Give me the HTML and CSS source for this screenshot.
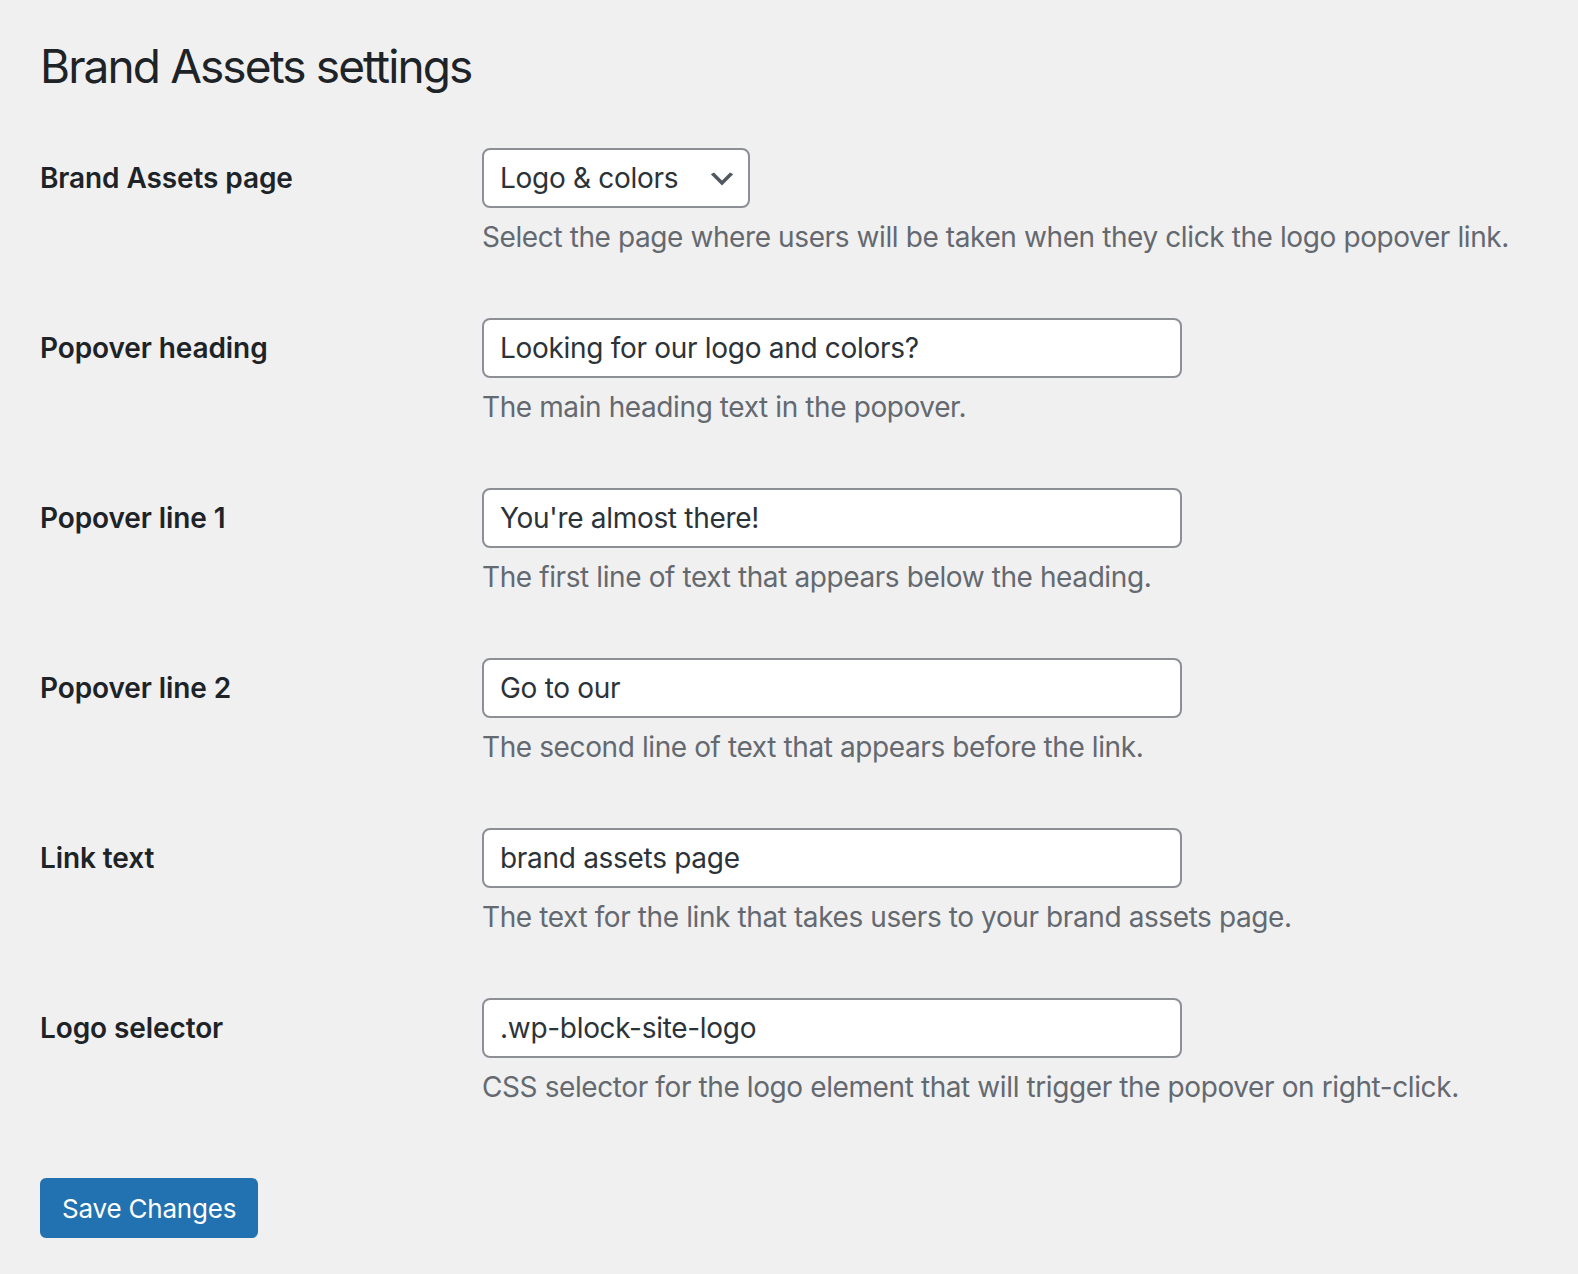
FILE: index.html
```html
<!DOCTYPE html>
<html lang="en">
<head>
<meta charset="utf-8">
<title>Brand Assets settings</title>
<link rel="stylesheet" href="styles.css">
</head>
<body>
<div class="wrap">
  <h1 class="page-title">Brand Assets settings</h1>
  <form class="settings-form">
    <div class="form-table">
      <div class="form-row">
        <label class="row-label" for="ba-page">Brand Assets page</label>
        <div class="row-field">
          <div class="select-wrap">
            <select id="ba-page" class="select-input">
              <option>Logo &amp; colors</option>
            </select>
            <svg class="select-chevron" viewBox="0 0 20 20" width="32" height="32" aria-hidden="true"><path d="M5 6l5 5 5-5 2 1-7 7-7-7 2-1z" fill="#50575e"/></svg>
          </div>
          <p class="description">Select the page where users will be taken when they click the logo popover link.</p>
        </div>
      </div>
      <div class="form-row">
        <label class="row-label" for="ba-heading">Popover heading</label>
        <div class="row-field">
          <input id="ba-heading" class="text-input" type="text" value="Looking for our logo and colors?">
          <p class="description">The main heading text in the popover.</p>
        </div>
      </div>
      <div class="form-row">
        <label class="row-label" for="ba-line1">Popover line 1</label>
        <div class="row-field">
          <input id="ba-line1" class="text-input" type="text" value="You're almost there!">
          <p class="description">The first line of text that appears below the heading.</p>
        </div>
      </div>
      <div class="form-row">
        <label class="row-label" for="ba-line2">Popover line 2</label>
        <div class="row-field">
          <input id="ba-line2" class="text-input" type="text" value="Go to our">
          <p class="description">The second line of text that appears before the link.</p>
        </div>
      </div>
      <div class="form-row">
        <label class="row-label" for="ba-link">Link text</label>
        <div class="row-field">
          <input id="ba-link" class="text-input" type="text" value="brand assets page">
          <p class="description">The text for the link that takes users to your brand assets page.</p>
        </div>
      </div>
      <div class="form-row">
        <label class="row-label" for="ba-selector">Logo selector</label>
        <div class="row-field">
          <input id="ba-selector" class="text-input" type="text" value=".wp-block-site-logo">
          <p class="description">CSS selector for the logo element that will trigger the popover on right-click.</p>
        </div>
      </div>
    </div>
    <div class="submit-row">
      <button type="button" class="button-primary">Save Changes</button>
    </div>
  </form>
</div>
</body>
</html>
```
FILE: styles.css
```css
html, body {
  margin: 0;
  padding: 0;
  background: #f0f0f1;
}

body {
  font-family: Inter, "Noto Sans", "Liberation Sans", sans-serif;
  color: #1d2327;
  -webkit-font-smoothing: antialiased;
}

.wrap {
  padding: 0 40px;
}

.page-title {
  margin: 0;
  padding-top: 36px;
  font-size: 46px;
  line-height: 60px;
  font-weight: 400;
  letter-spacing: -1.9px;
  color: #1d2327;
  height: 82px;
}

.form-table {
  display: flex;
  flex-direction: column;
}

.form-row {
  display: grid;
  grid-template-columns: 442px 1fr;
  padding: 30px 0;
}

.row-label {
  padding-top: 12px;
  font-size: 28px;
  line-height: 36px;
  font-weight: 600;
  letter-spacing: -0.1px;
  color: #1d2327;
}

.row-field {
  display: flex;
  flex-direction: column;
  align-items: flex-start;
}

.select-wrap {
  position: relative;
  width: 268px;
  height: 60px;
}

.select-input {
  appearance: none;
  -webkit-appearance: none;
  box-sizing: border-box;
  width: 268px;
  height: 60px;
  margin: 0;
  padding: 0 48px 0 16px;
  border: 2px solid #8c8f94;
  border-radius: 8px;
  background: #fff;
  font-family: inherit;
  font-size: 28px;
  letter-spacing: -0.3px;
  color: #2c3338;
}

.select-chevron {
  position: absolute;
  right: 12px;
  top: 15px;
  pointer-events: none;
}

.text-input {
  box-sizing: border-box;
  width: 700px;
  height: 60px;
  margin: 0;
  padding: 0 16px;
  border: 2px solid #8c8f94;
  border-radius: 8px;
  background: #fff;
  font-family: inherit;
  font-size: 28px;
  letter-spacing: -0.3px;
  color: #2c3338;
}

.description {
  margin: 8px 0 0;
  font-size: 28px;
  line-height: 42px;
  letter-spacing: -0.4px;
  color: #646970;
  white-space: nowrap;
}

.submit-row {
  padding-top: 40px;
}

.button-primary {
  box-sizing: border-box;
  height: 60px;
  padding: 0 20px;
  border: 2px solid #2271b1;
  border-radius: 6px;
  background: #2271b1;
  color: #fff;
  font-family: inherit;
  font-size: 26px;
  letter-spacing: -0.2px;
  white-space: nowrap;
  cursor: pointer;
}
```
